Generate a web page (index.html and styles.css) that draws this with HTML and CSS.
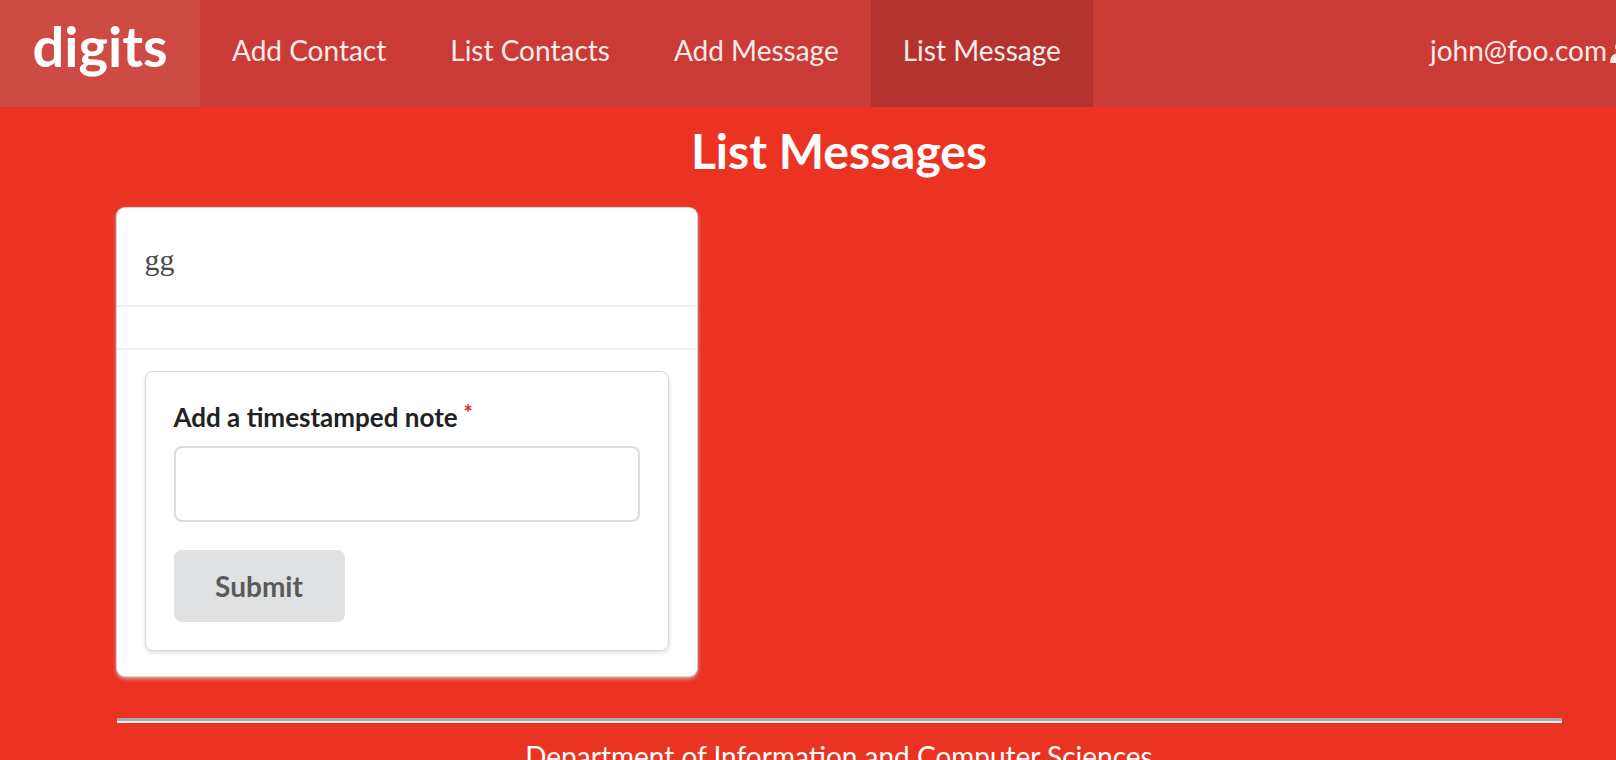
FILE: index.html
```html
<!DOCTYPE html>
<html lang="en">
<head>
<meta charset="utf-8">
<title>digits</title>
<link rel="stylesheet" href="styles.css">
</head>
<body>
<div class="page">
  <nav class="navbar">
    <a class="nav-item brand">digits</a>
    <a class="nav-item">Add Contact</a>
    <a class="nav-item">List Contacts</a>
    <a class="nav-item">Add Message</a>
    <a class="nav-item active">List Message</a>
    <a class="nav-item right">john@foo.com<svg class="user-icon" viewBox="0 0 20 24" width="20" height="24"><circle cx="10" cy="6" r="5" fill="#faebeb"/><path d="M0 22 C0 15 4 12 10 12 C16 12 20 15 20 22 Z" fill="#faebeb"/></svg></a>
  </nav>
  <main class="container">
    <h1 class="title">List Messages</h1>
    <div class="card">
      <div class="card-header">gg</div>
      <div class="card-empty"></div>
      <div class="card-extra">
        <form class="segment">
          <label class="field-label">Add a timestamped note<span class="req">*</span></label>
          <input class="field-input" type="text">
          <button class="submit-btn" type="button">Submit</button>
        </form>
      </div>
    </div>
    <hr class="footer-rule">
    <footer class="footer">Department of Information and Computer Sciences</footer>
  </main>
</div>
</body>
</html>
```

FILE: styles.css
```css
html, body {
  margin: 0;
  padding: 0;
}
body {
  background: #eb3324;
  font-family: Lato, "Helvetica Neue", Arial, sans-serif;
  overflow: hidden;
}
.page {
  width: 1678px;
}
.navbar {
  display: flex;
  height: 107px;
  background: #c93b34;
}
.nav-item {
  display: flex;
  align-items: center;
  padding: 0 32px 8px;
  color: #faebeb;
  font-size: 28px;
  text-decoration: none;
}
.brand {
  width: 200px;
  box-sizing: border-box;
  justify-content: center;
  padding: 0 0 16px;
  background: #cd4b44;
  font-size: 56px;
  font-weight: 700;
  color: #ffffff;
}
.active {
  background: #b5332e;
}
.right {
  margin-left: auto;
  padding-right: 48px;
}
.user-icon {
  margin-left: 3px;
  margin-top: 6px;
}
.container {
  width: 1445px;
  margin: 0 auto;
}
.title {
  margin: 15px 0 28px;
  text-align: center;
  font-size: 48px;
  line-height: 58px;
  font-weight: 700;
  color: #ffffff;
}
.card {
  width: 580px;
  background: #ffffff;
  border-radius: 8px;
  box-shadow: 0 0 0 1px #d4d4d5, 0 2px 4px 0 #d4d4d5;
}
.card-header {
  height: 99px;
  box-sizing: border-box;
  display: flex;
  align-items: center;
  padding: 6px 28px 0;
  border-bottom: 2px solid #f0f0f0;
  font-family: "Liberation Serif", serif;
  font-size: 30px;
  color: #4a4a4a;
}
.card-empty {
  height: 41px;
  border-bottom: 2px solid #f0f0f0;
}
.card-extra {
  padding: 21px 28px 25px;
}
.segment {
  margin: 0;
  padding: 29px 28px 28px;
  border: 1px solid #d8d8d9;
  border-radius: 8px;
  box-shadow: 0 2px 4px 0 rgba(34, 36, 38, 0.15);
}
.field-label {
  display: block;
  margin-bottom: 13px;
  font-size: 26px;
  line-height: 32px;
  font-weight: 700;
  color: #212121;
}
.req {
  display: inline-block;
  vertical-align: top;
  margin: -4px 0 0 6px;
  font-size: 22px;
  color: #db2828;
}
.field-input {
  display: block;
  width: 100%;
  height: 76px;
  box-sizing: border-box;
  border: 2px solid #dcdcdc;
  border-radius: 8px;
  background: #ffffff;
}
.submit-btn {
  display: block;
  margin-top: 28px;
  width: 171px;
  height: 72px;
  border: 0;
  border-radius: 8px;
  background: #e0e1e2;
  font-family: Lato, "Helvetica Neue", Arial, sans-serif;
  font-size: 28px;
  font-weight: 700;
  color: #5a5a5a;
}
.footer-rule {
  margin: 42px 0 0;
  height: 0;
  border: 0;
  border-top: 3px solid #a9a9a9;
  border-bottom: 2px solid #f0f0f0;
}
.footer {
  margin-top: 16px;
  text-align: center;
  font-size: 28px;
  line-height: 34px;
  color: #ffffff;
}
```
